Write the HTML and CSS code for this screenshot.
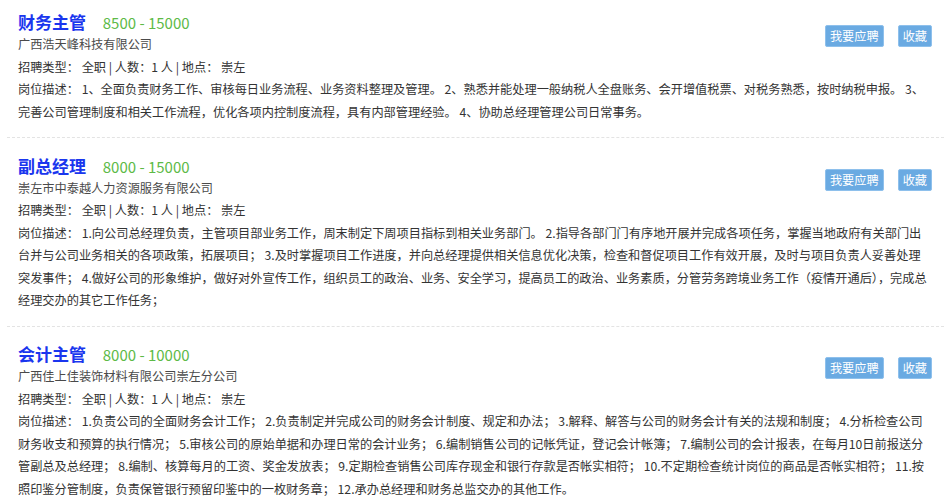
FILE: index.html
```html
<!DOCTYPE html>
<html lang="zh-CN">
<head>
<meta charset="utf-8">
<title>招聘信息</title>
<link rel="stylesheet" href="styles.css">
</head>
<body>
<div class="job-list">
  <div class="job">
    <div class="job-head">
      <div class="job-title-line">
        <span class="job-title">财务主管</span>
        <span class="salary">8500 - 15000</span>
      </div>
      <div class="actions">
        <span class="btn">我要应聘</span>
        <span class="btn">收藏</span>
      </div>
    </div>
    <div class="company">广西浩天峰科技有限公司</div>
    <div class="meta">招聘类型：&nbsp;全职 | 人数：1 人 | 地点：&nbsp;崇左</div>
    <div class="desc">岗位描述：&nbsp;1、全面负责财务工作、审核每日业务流程、业务资料整理及管理。 2、熟悉并能处理一般纳税人全盘账务、会开增值税票、对税务熟悉，按时纳税申报。 3、<br>完善公司管理制度和相关工作流程，优化各项内控制度流程，具有内部管理经验。 4、协助总经理管理公司日常事务。</div>
  </div>
  <div class="job">
    <div class="job-head">
      <div class="job-title-line">
        <span class="job-title">副总经理</span>
        <span class="salary">8000 - 15000</span>
      </div>
      <div class="actions">
        <span class="btn">我要应聘</span>
        <span class="btn">收藏</span>
      </div>
    </div>
    <div class="company">崇左市中泰越人力资源服务有限公司</div>
    <div class="meta">招聘类型：&nbsp;全职 | 人数：1 人 | 地点：&nbsp;崇左</div>
    <div class="desc">岗位描述：&nbsp;1.向公司总经理负责，主管项目部业务工作，周末制定下周项目指标到相关业务部门。 2.指导各部门门有序地开展并完成各项任务，掌握当地政府有关部门出台并与公司业务相关的各项政策，拓展项目； 3.及时掌握项目工作进度，并向总经理提供相关信息优化决策，检查和督促项目工作有效开展，及时与项目负责人妥善处理突发事件； 4.做好公司的形象维护，做好对外宣传工作，组织员工的政治、业务、安全学习，提高员工的政治、业务素质，分管劳务跨境业务工作（疫情开通后），完成总经理交办的其它工作任务；</div>
  </div>
  <div class="job">
    <div class="job-head">
      <div class="job-title-line">
        <span class="job-title">会计主管</span>
        <span class="salary">8000 - 10000</span>
      </div>
      <div class="actions">
        <span class="btn">我要应聘</span>
        <span class="btn">收藏</span>
      </div>
    </div>
    <div class="company">广西佳上佳装饰材料有限公司崇左分公司</div>
    <div class="meta">招聘类型：&nbsp;全职 | 人数：1 人 | 地点：&nbsp;崇左</div>
    <div class="desc">岗位描述：&nbsp;1.负责公司的全面财务会计工作； 2.负责制定并完成公司的财务会计制度、规定和办法； 3.解释、解答与公司的财务会计有关的法规和制度； 4.分析检查公司财务收支和预算的执行情况； 5.审核公司的原始单据和办理日常的会计业务； 6.编制销售公司的记帐凭证，登记会计帐簿； 7.编制公司的会计报表，在每月10日前报送分管副总及总经理； 8.编制、核算每月的工资、奖金发放表； 9.定期检查销售公司库存现金和银行存款是否帐实相符； 10.不定期检查统计岗位的商品是否帐实相符； 11.按照印鉴分管制度，负责保管银行预留印鉴中的一枚财务章； 12.承办总经理和财务总监交办的其他工作。</div>
  </div>
</div>
</body>
</html>
```
FILE: styles.css
```css
html, body {
  margin: 0;
  padding: 0;
  background: #ffffff;
}

body {
  font-family: "Noto Sans CJK SC", "Noto Sans", sans-serif;
  font-size: 12.2px;
  color: #333333;
}

.job-list {
  padding-left: 7px;
}

.job {
  padding: 14.5px 12px 14px 11px;
  border-bottom: 1px dashed #e3e3e3;
}

.job:first-child {
  padding-top: 9px;
  padding-bottom: 14px;
}

.job-head {
  display: flex;
  justify-content: space-between;
  align-items: flex-start;
  height: 24px;
}

.job-title-line {
  height: 24px;
  line-height: 26px;
  white-space: nowrap;
}

.job-title {
  font-size: 17px;
  font-weight: bold;
  color: #1a36ee;
}

.salary {
  margin-left: 14px;
  font-size: 15px;
  color: #5dba47;
}

.actions {
  display: flex;
  gap: 14px;
  margin-top: 16px;
}

.btn {
  display: block;
  height: 22px;
  line-height: 21px;
  padding: 0 4px;
  background: #6aaae2;
  border: 1px solid #8ec0ec;
  border-radius: 2px;
  box-sizing: border-box;
  color: #ffffff;
  font-size: 12.2px;
  white-space: nowrap;
}

.company {
  line-height: 22.5px;
  color: #4a4a4a;
}

.meta {
  line-height: 22.5px;
  color: #333333;
}

.desc {
  line-height: 22.5px;
  color: #333333;
}
```
